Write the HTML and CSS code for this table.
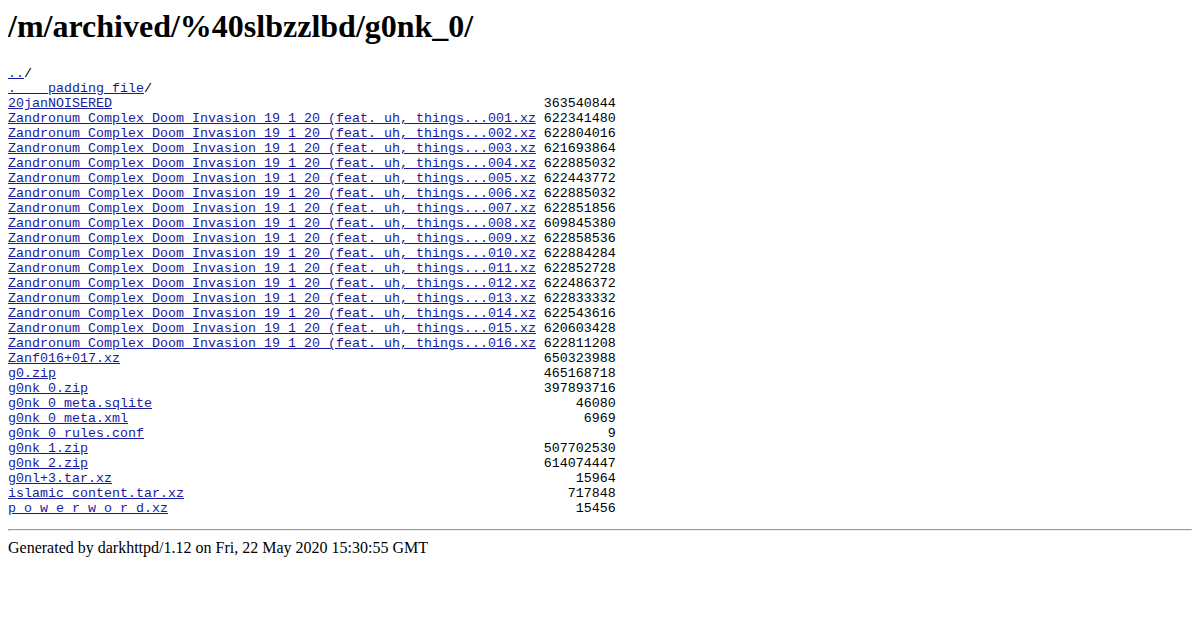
FILE: index.html
```html
<!DOCTYPE html>
<html>
<head>
<meta charset="utf-8">
<title>/m/archived/%40slbzzlbd/g0nk_0/</title>
<link rel="stylesheet" href="styles.css">
</head>
<body class="page">
<h1 class="title">/m/archived/%40slbzzlbd/g0nk_0/</h1>
<div class="listing">
  <div class="row"><span class="name"><a class="link" href="..">..</a>/</span><span class="size"></span></div>
  <div class="row"><span class="name"><a class="link" href="#">.____padding_file</a>/</span><span class="size"></span></div>
  <div class="row"><span class="name"><a class="link" href="#">20janNOISERED</a></span><span class="size">363540844</span></div>
  <div class="row"><span class="name"><a class="link" href="#">Zandronum_Complex_Doom_Invasion_19_1_20_(feat._uh,_things...001.xz</a></span><span class="size">622341480</span></div>
  <div class="row"><span class="name"><a class="link" href="#">Zandronum_Complex_Doom_Invasion_19_1_20_(feat._uh,_things...002.xz</a></span><span class="size">622804016</span></div>
  <div class="row"><span class="name"><a class="link" href="#">Zandronum_Complex_Doom_Invasion_19_1_20_(feat._uh,_things...003.xz</a></span><span class="size">621693864</span></div>
  <div class="row"><span class="name"><a class="link" href="#">Zandronum_Complex_Doom_Invasion_19_1_20_(feat._uh,_things...004.xz</a></span><span class="size">622885032</span></div>
  <div class="row"><span class="name"><a class="link" href="#">Zandronum_Complex_Doom_Invasion_19_1_20_(feat._uh,_things...005.xz</a></span><span class="size">622443772</span></div>
  <div class="row"><span class="name"><a class="link" href="#">Zandronum_Complex_Doom_Invasion_19_1_20_(feat._uh,_things...006.xz</a></span><span class="size">622885032</span></div>
  <div class="row"><span class="name"><a class="link" href="#">Zandronum_Complex_Doom_Invasion_19_1_20_(feat._uh,_things...007.xz</a></span><span class="size">622851856</span></div>
  <div class="row"><span class="name"><a class="link" href="#">Zandronum_Complex_Doom_Invasion_19_1_20_(feat._uh,_things...008.xz</a></span><span class="size">609845380</span></div>
  <div class="row"><span class="name"><a class="link" href="#">Zandronum_Complex_Doom_Invasion_19_1_20_(feat._uh,_things...009.xz</a></span><span class="size">622858536</span></div>
  <div class="row"><span class="name"><a class="link" href="#">Zandronum_Complex_Doom_Invasion_19_1_20_(feat._uh,_things...010.xz</a></span><span class="size">622884284</span></div>
  <div class="row"><span class="name"><a class="link" href="#">Zandronum_Complex_Doom_Invasion_19_1_20_(feat._uh,_things...011.xz</a></span><span class="size">622852728</span></div>
  <div class="row"><span class="name"><a class="link" href="#">Zandronum_Complex_Doom_Invasion_19_1_20_(feat._uh,_things...012.xz</a></span><span class="size">622486372</span></div>
  <div class="row"><span class="name"><a class="link" href="#">Zandronum_Complex_Doom_Invasion_19_1_20_(feat._uh,_things...013.xz</a></span><span class="size">622833332</span></div>
  <div class="row"><span class="name"><a class="link" href="#">Zandronum_Complex_Doom_Invasion_19_1_20_(feat._uh,_things...014.xz</a></span><span class="size">622543616</span></div>
  <div class="row"><span class="name"><a class="link" href="#">Zandronum_Complex_Doom_Invasion_19_1_20_(feat._uh,_things...015.xz</a></span><span class="size">620603428</span></div>
  <div class="row"><span class="name"><a class="link" href="#">Zandronum_Complex_Doom_Invasion_19_1_20_(feat._uh,_things...016.xz</a></span><span class="size">622811208</span></div>
  <div class="row"><span class="name"><a class="link" href="#">Zanf016+017.xz</a></span><span class="size">650323988</span></div>
  <div class="row"><span class="name"><a class="link" href="#">g0.zip</a></span><span class="size">465168718</span></div>
  <div class="row"><span class="name"><a class="link" href="#">g0nk_0.zip</a></span><span class="size">397893716</span></div>
  <div class="row"><span class="name"><a class="link" href="#">g0nk_0_meta.sqlite</a></span><span class="size">46080</span></div>
  <div class="row"><span class="name"><a class="link" href="#">g0nk_0_meta.xml</a></span><span class="size">6969</span></div>
  <div class="row"><span class="name"><a class="link" href="#">g0nk_0_rules.conf</a></span><span class="size">9</span></div>
  <div class="row"><span class="name"><a class="link" href="#">g0nk_1.zip</a></span><span class="size">507702530</span></div>
  <div class="row"><span class="name"><a class="link" href="#">g0nk_2.zip</a></span><span class="size">614074447</span></div>
  <div class="row"><span class="name"><a class="link" href="#">g0nl+3.tar.xz</a></span><span class="size">15964</span></div>
  <div class="row"><span class="name"><a class="link" href="#">islamic_content.tar.xz</a></span><span class="size">717848</span></div>
  <div class="row"><span class="name"><a class="link" href="#">p_o_w_e_r_w_o_r_d.xz</a></span><span class="size">15456</span></div>
</div>
<hr class="rule">
<div class="footer">Generated by darkhttpd/1.12 on Fri, 22 May 2020 15:30:55 GMT</div>
</body>
</html>
```

FILE: styles.css
```css
html {
  background: #ffffff;
}

.page {
  margin: 8px;
  color: #000000;
  font-family: "Liberation Serif", "Times New Roman", serif;
  font-size: 16px;
}

.title {
  margin: 0 0 21.44px;
  font-family: "Liberation Serif", "Times New Roman", serif;
  font-size: 32px;
  font-weight: bold;
  line-height: 37px;
}

.listing {
  margin: 0 0 13px;
  font-family: "Liberation Mono", "Courier New", monospace;
  font-size: 13.333px;
  line-height: 15px;
}

.row {
  display: grid;
  grid-template-columns: 66ch 10ch;
  height: 15px;
}

.name,
.size {
  white-space: pre;
}

.size {
  text-align: right;
}

.link {
  color: #1a1aa0;
  text-decoration: underline;
}

.rule {
  margin: 8px 0;
  height: 0;
  border-style: solid;
  border-width: 1px;
  border-top-color: #9a9a9a;
  border-left-color: #9a9a9a;
  border-right-color: #eeeeee;
  border-bottom-color: #eeeeee;
}

.footer {
  line-height: 18px;
}
```
